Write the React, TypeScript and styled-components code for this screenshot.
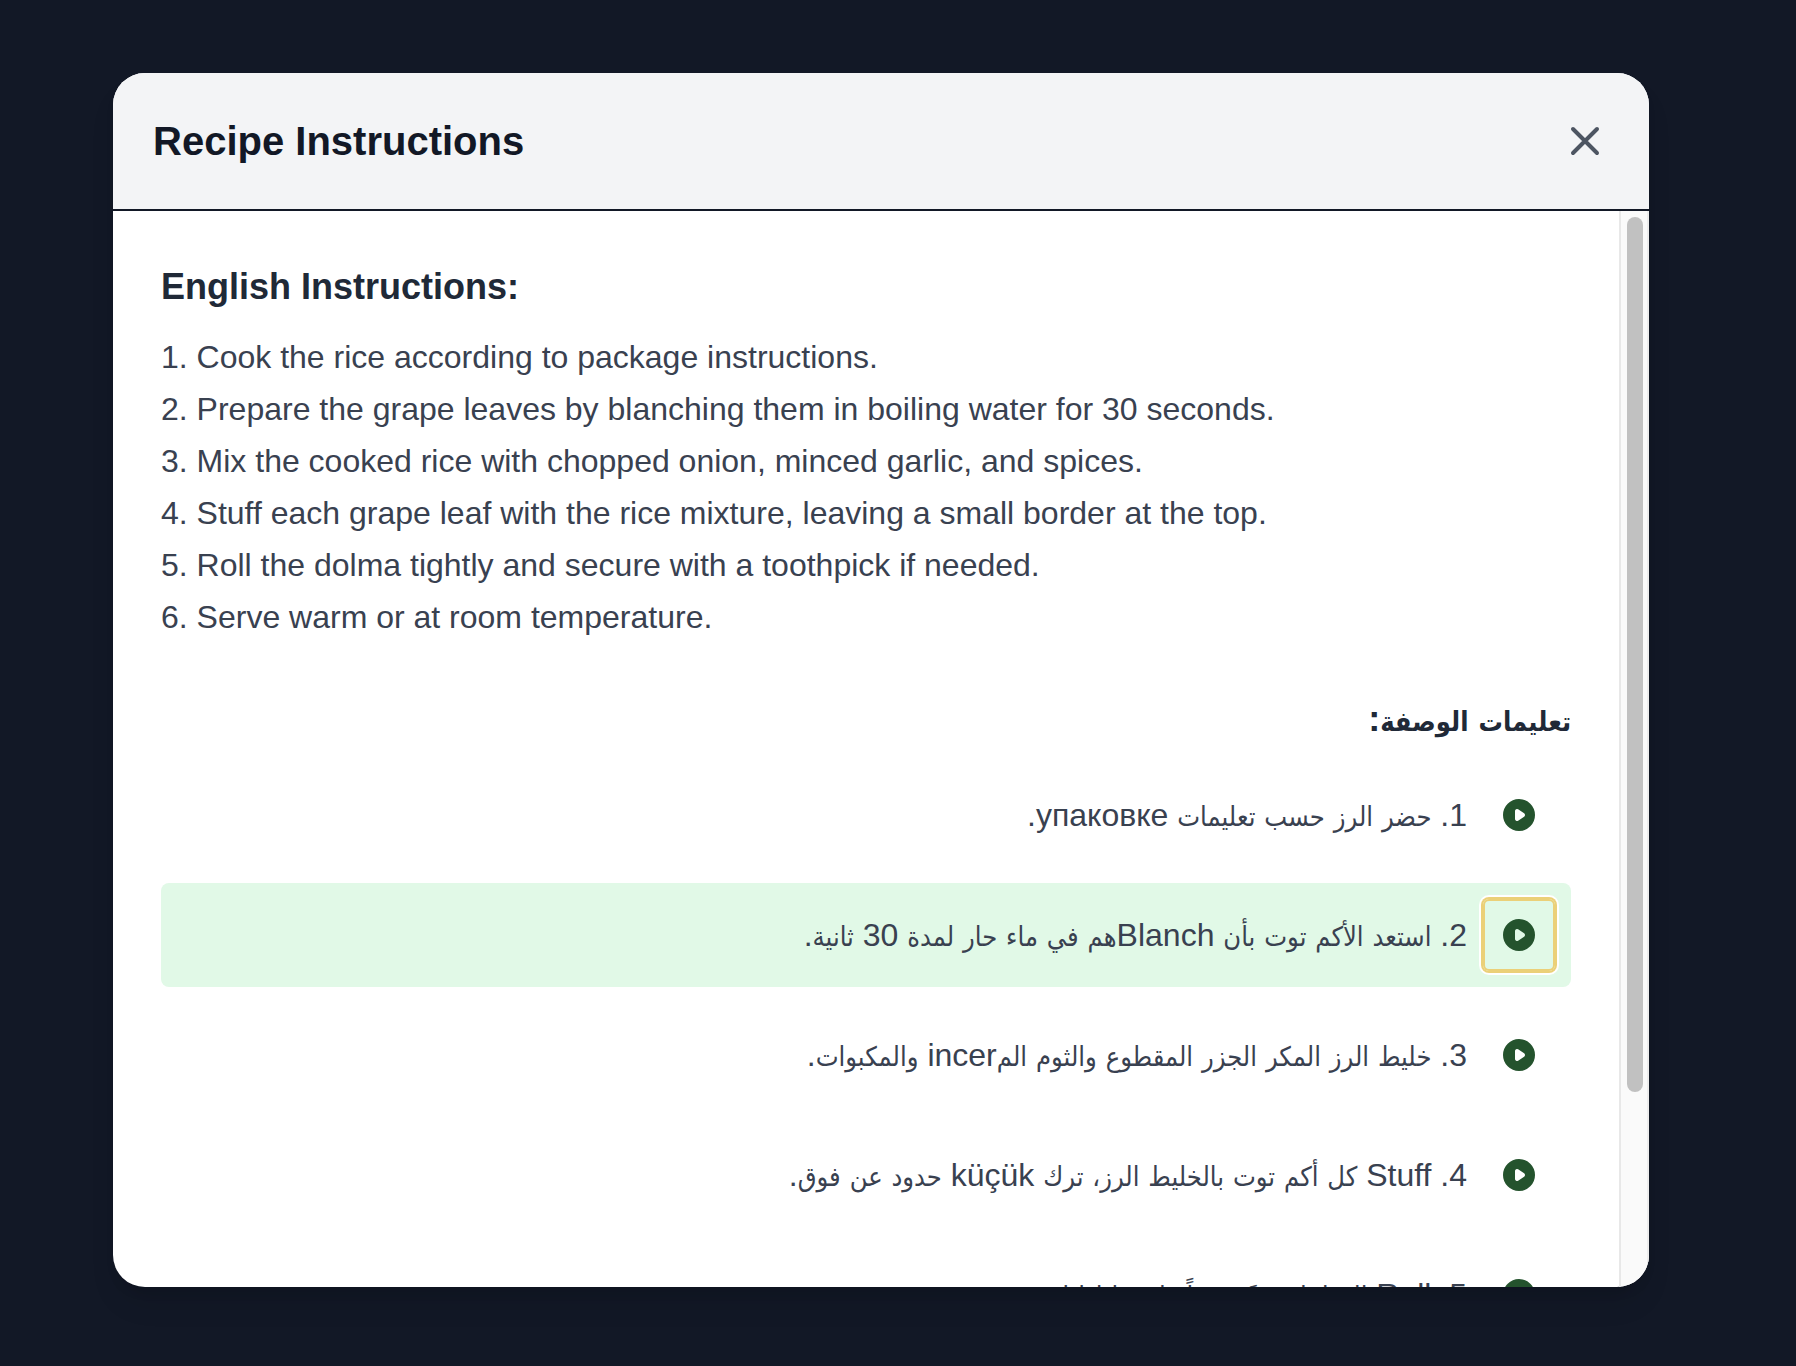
import { useEffect, useLayoutEffect, useRef, useState } from "react";
import styled, { createGlobalStyle } from "styled-components";

const GlobalStyle = createGlobalStyle`
  *, *::before, *::after { box-sizing: border-box; }
  body {
    margin: 0;
    background: #121826;
    font-family: "Liberation Sans", Arial, "DejaVu Sans Condensed", "DejaVu Sans", sans-serif;
  }
  h2, h3, p, ol { margin: 0; padding: 0; }
`;

const Backdrop = styled.main`
  display: flex;
  height: 100vh;
  padding: 73px 147px 79px 113px;
  background: #121826;
`;

const Dialog = styled.section`
  flex: 1;
  display: flex;
  flex-direction: column;
  min-width: 0;
  overflow: hidden;
  border-radius: 32px;
  background: #ffffff;
  box-shadow: 0 20px 30px -6px rgba(0, 0, 0, 0.1), 0 8px 12px -4px rgba(0, 0, 0, 0.1);
`;

const Header = styled.header`
  display: flex;
  align-items: center;
  justify-content: space-between;
  padding: 40px;
  border-bottom: 2px solid #121826;
  background: #f3f4f6;
`;

const Title = styled.h2`
  font-size: 40px;
  line-height: 56px;
  font-weight: 700;
  color: #121826;
`;

const CloseButton = styled.button`
  display: flex;
  padding: 0;
  border: 0;
  background: none;
  color: #4d5562;
  cursor: pointer;

  svg { width: 48px; height: 48px; }
`;

const Body = styled.div`
  flex: 1;
  display: flex;
  min-height: 0;
`;

const Scroller = styled.div`
  flex: 1;
  min-width: 0;
  padding: 48px;
  overflow-y: auto;
  scrollbar-width: none;
`;

const Track = styled.div`
  width: 30px;
  padding: 6px 6px 10px;
  border-left: 2px solid #e8e8e8;
  border-right: 2px solid #ededed;
  background: #fafafa;
`;

const Thumb = styled.div`
  width: 16px;
  margin: 0 auto;
  border-radius: 8px;
  background: #c1c1c1;
`;

const Language = styled.section`
  & + & { margin-top: 48px; }
`;

const Subtitle = styled.h3`
  margin-bottom: 16px;
  font-size: 36px;
  line-height: 56px;
  font-weight: 700;
  color: #202937;
`;

const Line = styled.p`
  font-size: 32px;
  line-height: 52px;
  color: #394150;
`;

/* Arabic glyphs run large beside the Latin face, so they are set smaller. */
const ArabicRun = styled.span`
  font-family: "DejaVu Sans Condensed", "DejaVu Sans", sans-serif;
  font-size: 27px;
  line-height: 1;
`;

const Steps = styled.ol`
  display: flex;
  flex-direction: column;
  gap: 16px;
  list-style: none;
`;

const Step = styled.li<{ $active: boolean }>`
  display: flex;
  align-items: center;
  gap: 16px;
  padding: 16px;
  border-radius: 8px;
  background: ${({ $active }) => ($active ? "#e1f9e7" : "transparent")};
`;

const PlayButton = styled.button<{ $active: boolean }>`
  display: flex;
  padding: 16px;
  border: 0;
  border-radius: 6px;
  background: none;
  color: #24532d;
  cursor: pointer;
  box-shadow: ${({ $active }) =>
    $active ? "inset 0 0 0 2px #ebd078, 0 0 0 2px #ebd078, 0 0 0 4px #ffffff" : "none"};

  svg { width: 40px; height: 40px; }
`;

const english = [
  "1. Cook the rice according to package instructions.",
  "2. Prepare the grape leaves by blanching them in boiling water for 30 seconds.",
  "3. Mix the cooked rice with chopped onion, minced garlic, and spices.",
  "4. Stuff each grape leaf with the rice mixture, leaving a small border at the top.",
  "5. Roll the dolma tightly and secure with a toothpick if needed.",
  "6. Serve warm or at room temperature.",
];

const arabic = [
  "1. حضر الرز حسب تعليمات упаковке.",
  "2. استعد الأكم توت بأن Blanchهم في ماء حار لمدة 30 ثانية.",
  "3. خليط الرز المكر الجزر المقطوع والثوم المincer والمكبوات.",
  "4. Stuff كل أكم توت بالخليط الرز، ترك küçük حدود عن فوق.",
  "5. Roll الدولما بدقةً وسداً واحمها إذا لزم.",
  "6. قدم ساخناً أو في درجة حرارة الغرفة.",
];

function MixedText({ text }: { text: string }) {
  return (
    <>
      {text.split(/([\u0600-\u06FF]+)/).map((run, i) =>
        i % 2 === 1 ? <ArabicRun key={i}>{run}</ArabicRun> : run
      )}
    </>
  );
}

function PlayIcon() {
  return (
    <svg viewBox="0 0 20 20" aria-hidden="true">
      <path
        fill="currentColor"
        fillRule="evenodd"
        clipRule="evenodd"
        d="M10 18a8 8 0 100-16 8 8 0 000 16zM9.555 7.168A1 1 0 008 8v4a1 1 0 001.555.832l3-2a1 1 0 000-1.664l-3-2z"
      />
    </svg>
  );
}

function CloseIcon() {
  return (
    <svg viewBox="0 0 24 24" fill="none" stroke="currentColor" strokeWidth="2" strokeLinecap="round" aria-hidden="true">
      <path d="M6 18L18 6M6 6l12 12" />
    </svg>
  );
}

export default function App() {
  const scroller = useRef<HTMLDivElement>(null);
  const [thumb, setThumb] = useState({ height: 0, top: 0 });
  const [active, setActive] = useState(1);

  const measure = () => {
    const el = scroller.current;
    if (!el) return;
    const ratio = (el.clientHeight - 16) / el.scrollHeight;
    setThumb({ height: Math.round(el.clientHeight * ratio), top: Math.round(el.scrollTop * ratio) });
  };

  useLayoutEffect(measure, []);
  useEffect(() => {
    window.addEventListener("resize", measure);
    return () => window.removeEventListener("resize", measure);
  }, []);

  return (
    <>
      <GlobalStyle />
      <Backdrop>
        <Dialog role="dialog" aria-labelledby="dialog-title">
          <Header>
            <Title id="dialog-title">Recipe Instructions</Title>
            <CloseButton type="button" aria-label="Close">
              <CloseIcon />
            </CloseButton>
          </Header>
          <Body>
            <Scroller ref={scroller} onScroll={measure}>
              <Language lang="en">
                <Subtitle>English Instructions:</Subtitle>
                {english.map((text) => (
                  <Line key={text}>{text}</Line>
                ))}
              </Language>
              <Language lang="ar" dir="rtl">
                <Subtitle>
                  <MixedText text="تعليمات الوصفة:" />
                </Subtitle>
                <Steps>
                  {arabic.map((text, i) => (
                    <Step key={text} $active={i === active}>
                      <PlayButton
                        type="button"
                        aria-label={`Play step ${i + 1}`}
                        $active={i === active}
                        onClick={() => setActive(i)}
                      >
                        <PlayIcon />
                      </PlayButton>
                      <Line>
                        <MixedText text={text} />
                      </Line>
                    </Step>
                  ))}
                </Steps>
              </Language>
            </Scroller>
            <Track aria-hidden="true">
              <Thumb style={{ height: thumb.height, marginTop: thumb.top }} />
            </Track>
          </Body>
        </Dialog>
      </Backdrop>
    </>
  );
}
